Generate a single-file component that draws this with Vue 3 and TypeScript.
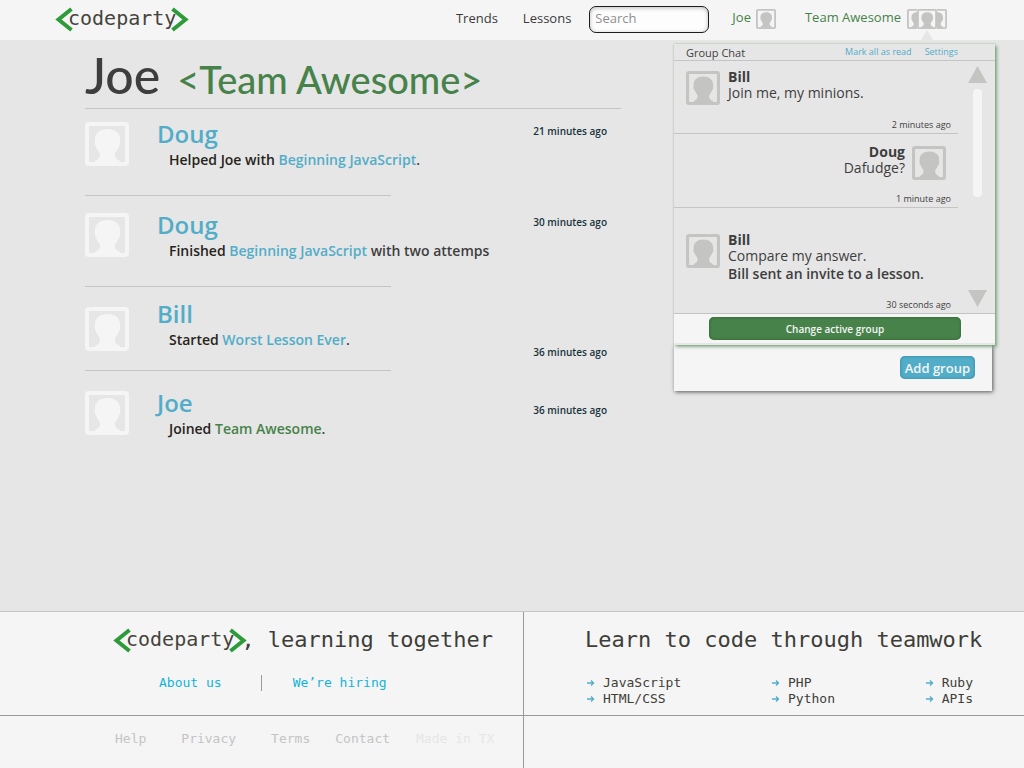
<script setup lang="ts">
import { ref } from 'vue'

interface Activity {
  who: string
  before: string
  link: string
  after: string
  team?: boolean
  time: string
  kind: string
}

interface Message {
  who: string
  text: string
  notice?: string
  time: string
  kind: string
}

const query = ref('')

const activities: Activity[] = [
  { who: 'Doug', before: 'Helped Joe with', link: 'Beginning JavaScript', after: '.', time: '21 minutes ago', kind: 'first' },
  { who: 'Doug', before: 'Finished', link: 'Beginning JavaScript', after: ' with two attemps', time: '30 minutes ago', kind: 'second' },
  { who: 'Bill', before: 'Started', link: 'Worst Lesson Ever', after: '.', time: '36 minutes ago', kind: 'third' },
  { who: 'Joe', before: 'Joined', link: 'Team Awesome', after: '.', team: true, time: '36 minutes ago', kind: 'fourth' },
]

const messages: Message[] = [
  { who: 'Bill', text: 'Join me, my minions.', time: '2 minutes ago', kind: 'short' },
  { who: 'Doug', text: 'Dafudge?', time: '1 minute ago', kind: 'reply' },
  { who: 'Bill', text: 'Compare my answer.', notice: 'Bill sent an invite to a lesson.', time: '30 seconds ago', kind: 'long' },
]

const topics: string[][] = [
  ['JavaScript', 'HTML/CSS'],
  ['PHP', 'Python'],
  ['Ruby', 'APIs'],
]

const legal: string[] = ['Help', 'Privacy', 'Terms', 'Contact']
</script>

<template>
  <div class="page">
    <svg class="defs" width="0" height="0" aria-hidden="true">
      <symbol id="avatar" viewBox="0 0 44 44">
        <rect x="2" y="2" width="40" height="40" rx="2" fill="none" stroke="currentColor" stroke-width="4" />
        <path
          fill="currentColor"
          d="M10 17C10 11 15 7 22.500 7S35 11 35 17C35.500 20 35.500 23 34 24.500C33 28 30 30 30 32.500C30 36 31 37 35 39V41H10V39C13.500 37 15 36 15 32.500C15 30 12 28 11 24.500C9.500 23 9.500 20 10 17Z"
        />
      </symbol>
      <symbol id="chevron" viewBox="0 0 18 25">
        <path d="M16.500 2L3.500 12.500L16.500 23" fill="none" stroke="#2e9b3a" stroke-width="4" />
      </symbol>
      <symbol id="arrow" viewBox="0 0 8 8">
        <path d="M0 4H7M4 1.500L6.500 4L4 6.500" fill="none" stroke="#52adc8" stroke-width="1.300" />
      </symbol>
    </svg>

    <header class="top">
      <a class="logo" href="#" aria-label="codeparty">
        <svg class="chev"><use href="#chevron" /></svg>
        <span>codeparty</span>
        <svg class="chev flip"><use href="#chevron" /></svg>
      </a>
      <nav class="nav">
        <a class="item" href="#">Trends</a>
        <a class="item lessons" href="#">Lessons</a>
        <input v-model="query" class="search" type="search" placeholder="Search" aria-label="Search" />
        <a class="user" href="#">
          Joe
          <svg class="tiny"><use href="#avatar" /></svg>
        </a>
        <a class="user team" href="#">
          Team Awesome
          <span class="trio">
            <svg class="tiny"><use href="#avatar" /></svg>
            <svg class="tiny mid"><use href="#avatar" /></svg>
            <svg class="tiny"><use href="#avatar" /></svg>
          </span>
        </a>
      </nav>
    </header>

    <main class="main">
      <section class="feed">
        <h1><span class="owner">Joe</span> <a href="#">&lt;Team Awesome&gt;</a></h1>
        <article v-for="(a, i) in activities" :key="i" class="activity" :class="a.kind">
          <svg class="face"><use href="#avatar" /></svg>
          <div class="what">
            <h2><a href="#">{{ a.who }}</a></h2>
            <p><b>{{ a.before }}</b> <a href="#" :class="{ green: a.team }">{{ a.link }}</a>{{ a.after }}</p>
          </div>
          <time>{{ a.time }}</time>
        </article>
      </section>

      <aside class="side">
        <section class="chat">
          <header class="chat-head">
            <h3>Group Chat</h3>
            <a href="#">Mark all as read</a>
            <a href="#">Settings</a>
          </header>
          <div class="chat-body">
            <div class="messages">
              <article v-for="(m, i) in messages" :key="i" class="message" :class="m.kind">
                <svg class="small-face"><use href="#avatar" /></svg>
                <div class="words">
                  <h4>{{ m.who }}</h4>
                  <p>{{ m.text }}</p>
                  <p v-if="m.notice" class="notice">{{ m.notice }}</p>
                </div>
                <time>{{ m.time }}</time>
              </article>
            </div>
            <div class="scroller">
              <button type="button" aria-label="Scroll up">
                <svg width="19" height="17" viewBox="0 0 19 17"><path d="M9.500 0L19 17H0Z" fill="#c4c4c2" /></svg>
              </button>
              <span class="thumb"></span>
              <button type="button" aria-label="Scroll down">
                <svg width="19" height="17" viewBox="0 0 19 17"><path d="M9.500 17L19 0H0Z" fill="#c4c4c2" /></svg>
              </button>
            </div>
          </div>
          <div class="chat-foot">
            <button type="button">Change active group</button>
          </div>
        </section>
        <div class="adder">
          <button type="button">Add group</button>
        </div>
      </aside>
    </main>

    <footer class="bottom">
      <section class="about">
        <h2>
          <span class="logo">
            <svg class="chev"><use href="#chevron" /></svg>
            <span>codeparty</span>
            <svg class="chev flip"><use href="#chevron" /></svg>
          </span>
          <span class="tagline">, learning together</span>
        </h2>
        <div class="about-links">
          <a href="#">About us</a>
          <a href="#">We’re hiring</a>
        </div>
      </section>
      <section class="learn">
        <h2>Learn to code through teamwork</h2>
        <div class="topics">
          <ul v-for="(col, i) in topics" :key="i">
            <li v-for="t in col" :key="t">
              <svg class="arrow"><use href="#arrow" /></svg>{{ t }}
            </li>
          </ul>
        </div>
      </section>
      <nav class="legal">
        <a v-for="l in legal" :key="l" href="#" :class="l.toLowerCase()">{{ l }}</a>
        <span>Made in TX</span>
      </nav>
      <div class="blank"></div>
    </footer>
  </div>
</template>

<style>
body {
  margin: 0;
  background: #e6e6e6;
}
</style>

<style scoped>
.page {
  display: flex;
  flex-direction: column;
  min-height: 100vh;
  background: #e6e6e6;
  color: #3e3e3e;
  font: 14px/16px "Open Sans", "Noto Sans", sans-serif;
}
.page * {
  box-sizing: border-box;
}
.defs {
  position: absolute;
}
a {
  color: #52adc8;
  text-decoration: none;
}
h1, h2, h3, h4, p, ul {
  margin: 0;
  padding: 0;
}
button {
  padding: 0;
  border: 0;
  background: none;
  font: inherit;
  cursor: pointer;
}

/* Header */
.top {
  display: flex;
  align-items: center;
  justify-content: space-between;
  height: 40px;
  padding: 0 77px 2px 55px;
  background: #f5f5f5;
}
.logo {
  display: flex;
  align-items: center;
  color: #45443c;
  font: 20px/24px "DejaVu Sans Mono", monospace;
}
.logo span {
  margin: 0 -5px;
  padding-bottom: 3px;
}
.chev {
  width: 18px;
  height: 25px;
}
.flip {
  transform: scaleX(-1);
}
.nav {
  display: flex;
  align-items: center;
  font-size: 13px;
  line-height: 20px;
}
.item {
  padding-bottom: 2px;
  color: #3a3a3a;
}
.lessons {
  margin: 0 18px 0 25px;
}
.search {
  width: 120px;
  height: 27px;
  padding: 0 5px 2px;
  border: 1px solid #1c1c1c;
  border-radius: 7px;
  background: #fdfdfd;
  box-shadow: inset 0 1px 4px #bbb;
  color: #3e3e3e;
  font: inherit;
  outline: none;
}
.search::placeholder {
  color: #8f8f8f;
}
.user {
  display: flex;
  align-items: center;
  gap: 5px;
  margin-left: 23px;
  padding-bottom: 4px;
  color: #47824a;
}
.team {
  gap: 6px;
  margin-left: 29px;
}
.tiny {
  width: 20px;
  height: 20px;
  margin-top: 4px;
  color: #c4c4c2;
  background: #f5f5f5;
}
.trio {
  position: relative;
  display: flex;
}
.trio::after {
  content: "";
  position: absolute;
  left: 14px;
  bottom: -11px;
  border: 6px solid transparent;
  border-top: 0;
  border-bottom: 10px solid #e6e6e6;
}
.mid {
  position: relative;
  z-index: 1;
  margin-left: -10px;
  margin-right: -10px;
}

/* Feed */
.main {
  display: flex;
  flex: 1;
  align-items: flex-start;
  gap: 53px;
  padding: 0 29px 0 85px;
}
.feed {
  flex: 1;
}
h1 {
  display: flex;
  align-items: baseline;
  gap: 17px;
  height: 69px;
  border-bottom: 1px solid #c4c4c4;
  font-family: Lato, "Open Sans", sans-serif;
  font-size: 38px;
  line-height: 70px;
  font-weight: 500;
  white-space: nowrap;
}
.owner {
  font-size: 50px;
}
h1 a, .green {
  color: #47824a;
}
.activity {
  position: relative;
  display: flex;
  align-items: flex-start;
  height: 87px;
  padding: 13px 14px 0 0;
}
.activity::after {
  content: "";
  position: absolute;
  left: 0;
  bottom: 0;
  width: 57%;
  border-bottom: 1px solid #c4c4c4;
}
.activity:last-child::after {
  display: none;
}
.second {
  height: 91px;
  padding-top: 17px;
}
.third {
  height: 84px;
  padding-top: 20px;
}
.fourth {
  padding-top: 20px;
}
.face {
  flex: none;
  width: 44px;
  height: 44px;
  color: #f5f5f5;
}
.what {
  flex: 1;
  margin-left: 28px;
}
.third .what {
  margin-top: -5px;
}
.what h2 {
  font-size: 24px;
  line-height: 24px;
  font-weight: 600;
}
.what p {
  padding: 6px 0 0 12px;
  font-weight: 600;
}
.what b {
  color: #26241a;
  font-weight: 600;
}
.activity time {
  color: #16333c;
  font-size: 10px;
  font-weight: 600;
  line-height: 18px;
}
.third time {
  margin-top: 36px;
}
.fourth time {
  margin-top: 10px;
}

/* Group chat */
.side {
  width: 321px;
  padding-top: 4px;
}
.chat {
  position: relative;
  box-shadow: 2px 2px 3px #47824a99, 0 0 2px #47824a66;
  background: #e6e6e6;
}
.chat-head {
  display: flex;
  align-items: center;
  gap: 13px;
  height: 17px;
  padding: 0 37px 0 12px;
  border-bottom: 1px solid #c4c4c4;
  font-size: 9px;
}
.chat-head h3 {
  flex: 1;
  padding-top: 2px;
  font-size: 11px;
  font-weight: 500;
}
.chat-body {
  display: flex;
  justify-content: space-between;
}
.messages {
  flex: 1;
}
.message {
  position: relative;
  display: flex;
  align-items: flex-start;
  gap: 8px;
  height: 73px;
  padding: 8px 12px 0;
  border-bottom: 1px solid #c4c4c4;
}
.reply {
  flex-direction: row-reverse;
  gap: 7px;
  height: 74px;
  padding-top: 10px;
  text-align: right;
}
.long {
  height: 105px;
  padding-top: 24px;
  border-bottom: 0;
}
.small-face {
  width: 34px;
  height: 34px;
  margin-top: 2px;
  color: #c4c4c2;
}
.message h4 {
  font-size: 14px;
  font-weight: 700;
}
.notice {
  font-weight: 600;
  line-height: 19px;
}
.message time {
  position: absolute;
  right: 7px;
  bottom: 0;
  font-size: 9px;
}
.scroller {
  display: flex;
  flex-direction: column;
  gap: 6px;
  width: 19px;
  margin: 5px 8px 6px 10px;
}
.scroller button, .scroller svg {
  display: block;
}
.thumb {
  width: 9px;
  height: 108px;
  margin: 0 5px auto;
  border-radius: 4px;
  background: #f5f5f5;
}
.chat-foot {
  padding: 3px 34px 3px 35px;
  border-top: 1px solid #c4c4c4;
  border-bottom: 2px solid #e6e6e6;
  background: #f5f5f5;
}
.chat-foot button {
  display: block;
  width: 100%;
  height: 23px;
  border-radius: 5px;
  background: #47824a;
  box-shadow: inset 0 0 3px #2b5a2e;
  color: #f5f5f5;
  font-size: 10px;
  font-weight: 600;
}
.adder {
  display: flex;
  justify-content: flex-end;
  margin-right: 3px;
  padding: 11px 17px 12px;
  background: #f5f5f5;
  box-shadow: 1px 1px 4px #555;
}
.adder button {
  height: 23px;
  padding: 0 5px;
  border-radius: 5px;
  background: #52adc8;
  box-shadow: inset 0 0 3px #2f7f98;
  color: #f5f5f5;
  font-size: 13px;
  font-weight: 600;
}

/* Footer */
.bottom {
  display: grid;
  grid-template-columns: 524fr 500fr;
  grid-template-rows: 104px 52px;
  border-top: 1px solid #c4c4c4;
  background: #f5f5f5;
  color: #3e3e38;
  font: 13px/16px "DejaVu Sans Mono", monospace;
}
.about, .learn {
  border-bottom: 1px solid #999;
}
.about, .legal {
  border-right: 1px solid #999;
}
.bottom h2 {
  font-size: 22px;
  line-height: 24px;
  font-weight: 400;
  white-space: nowrap;
}
.about h2 {
  display: flex;
  height: 40px;
  padding: 16px 0 0 113px;
}
.tagline {
  margin-left: -6px;
}
.about-links {
  display: flex;
  padding: 23px 0 0 159px;
}
.about-links a {
  color: #12b4d8;
}
.about-links a + a {
  margin-left: 39px;
  padding-left: 31px;
  border-left: 1px solid #999;
}
.learn h2 {
  padding: 16px 0 0 61px;
}
.topics {
  display: flex;
  justify-content: space-between;
  padding: 23px 51px 0 63px;
}
.topics ul {
  list-style: none;
}
.arrow {
  width: 8px;
  height: 8px;
  margin-right: 8px;
}
.legal {
  display: flex;
  padding: 15px 0 0 115px;
  white-space: nowrap;
}
.legal a {
  margin-right: 35px;
  color: #c4c4c4;
}
.legal .terms {
  margin-right: 25px;
}
.legal .contact {
  margin-right: 26px;
}
.legal span {
  color: #e6e6e6;
}
</style>
